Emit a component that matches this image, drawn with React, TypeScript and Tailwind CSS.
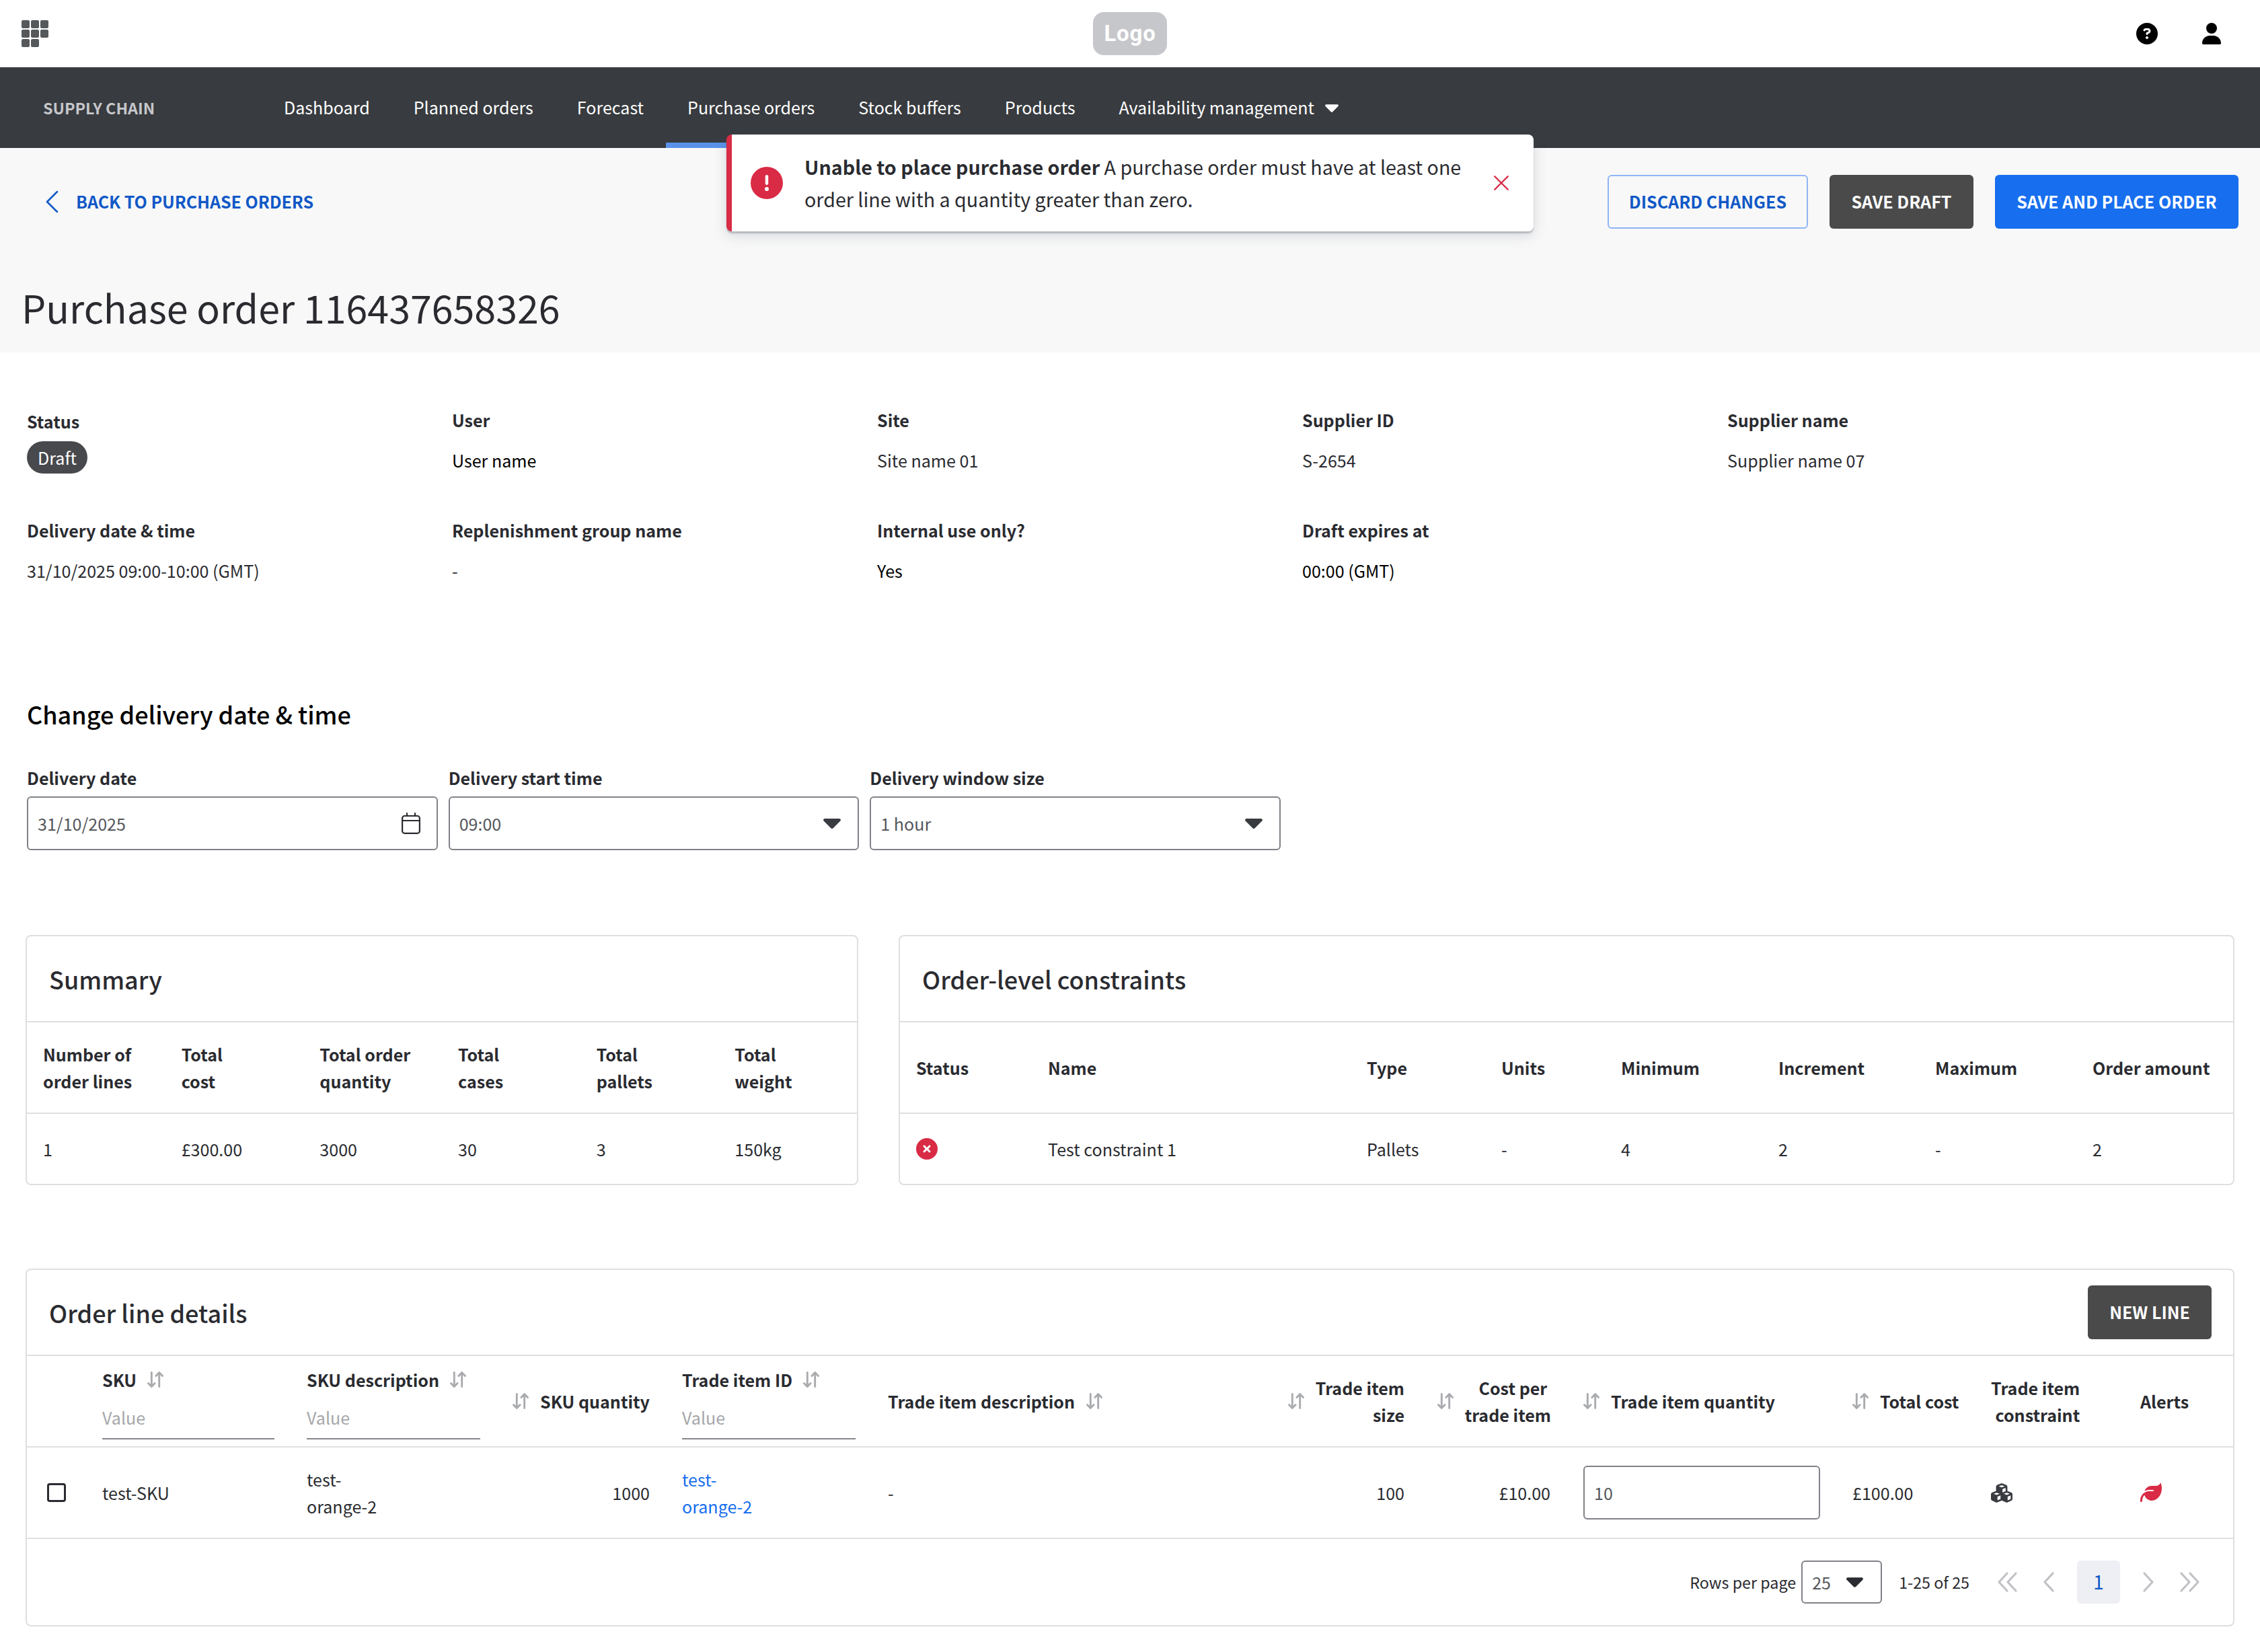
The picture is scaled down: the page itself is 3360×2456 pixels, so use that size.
import type { ReactNode } from "react";
import {
  FaCircleExclamation,
  FaCircleQuestion,
  FaCircleXmark,
  FaCubes,
  FaLeaf,
  FaUser,
} from "react-icons/fa6";

const navItems = [
  "Dashboard",
  "Planned orders",
  "Forecast",
  "Purchase orders",
  "Stock buffers",
  "Products",
];

const summary = [
  { label: ["Number of", "order lines"], value: "1" },
  { label: ["Total", "cost"], value: "£300.00" },
  { label: ["Total order", "quantity"], value: "3000" },
  { label: ["Total", "cases"], value: "30" },
  { label: ["Total", "pallets"], value: "3" },
  { label: ["Total", "weight"], value: "150kg" },
];

const Caret = ({ className }: { className?: string }) => (
  <svg viewBox="0 0 26 15" className={className} fill="currentColor">
    <path d="M2.2 0h21.6c1.9 0 2.8 2.2 1.5 3.5L14.6 14.3c-.9.9-2.3.9-3.2 0L.7 3.5C-.6 2.2.3 0 2.2 0z" />
  </svg>
);

const SortIcon = () => (
  <svg
    viewBox="0 0 24 24"
    className="size-6 shrink-0 text-[#a9abae]"
    fill="none"
    stroke="currentColor"
    strokeWidth="2.9"
    strokeLinecap="round"
    strokeLinejoin="round"
  >
    <path d="M6.3 1.5v21M1.5 17.6l4.8 4.9 4.8-4.9M17.7 22.5v-21M12.9 6.4l4.8-4.9 4.8 4.9" />
  </svg>
);

const Chevron = ({ d, className }: { d: string; className?: string }) => (
  <svg
    viewBox="0 0 32 32"
    className={className}
    fill="none"
    stroke="currentColor"
    strokeLinecap="round"
    strokeLinejoin="round"
  >
    <path d={d} />
  </svg>
);

const Field = ({ label, children }: { label: string; children: ReactNode }) => (
  <div className="flex flex-col gap-5">
    <p className="font-bold">{label}</p>
    <p>{children}</p>
  </div>
);

const Card = ({
  title,
  action,
  className,
  children,
}: {
  title: string;
  action?: ReactNode;
  className?: string;
  children: ReactNode;
}) => (
  <section className={`rounded-lg border-2 border-[#dedfe1] ${className ?? ""}`}>
    <div className="flex h-32 items-center justify-between border-b-2 border-[#dedfe1] pl-[33px] pr-8">
      <h2 className="text-[36px] font-medium leading-[48px]">{title}</h2>
      {action}
    </div>
    {children}
  </section>
);

const Filter = ({ label }: { label: string }) => (
  <div className="flex h-full flex-col px-6 pt-[15px]">
    <div className="flex items-center gap-4 font-bold">
      {label}
      <SortIcon />
    </div>
    <div className="mt-2 h-[61px] border-b-2 border-[#85878d] pt-2 font-normal text-[#a5a7aa]">
      Value
    </div>
  </div>
);

function Header() {
  return (
    <header className="flex h-[100px] items-center justify-between px-8">
      <div className="grid w-[400px] grid-cols-[12px_12px_12px] gap-0.5">
        {Array.from({ length: 8 }).map((_, i) => (
          <span key={i} className="size-3 rounded-[2px] bg-[#55595c]" />
        ))}
      </div>
      <div className="flex h-16 w-[110px] items-center justify-center rounded-2xl bg-[#c6c7cb] font-[Roboto,sans-serif] text-[33px] font-bold tracking-[0.8px] text-white">
        Logo
      </div>
      <div className="flex w-[400px] items-center justify-end gap-[66px] pr-[26px] text-black">
        <FaCircleQuestion className="size-8" />
        <FaUser className="h-8 w-7" />
      </div>
    </header>
  );
}

function Navbar() {
  return (
    <nav className="flex h-[120px] items-center bg-[#383b3f] pl-16 text-white">
      <p className="w-[325.5px] text-[23.3px] font-bold text-[#c6c7cb]">SUPPLY CHAIN</p>
      {navItems.map((item) => (
        <a
          key={item}
          className={`flex h-full items-center border-y-8 border-t-transparent px-[32.5px] pb-0.5 ${
            item === "Purchase orders" ? "border-b-[#5a92ea]" : "border-b-transparent"
          }`}
        >
          {item}
        </a>
      ))}
      <a className="flex h-full items-center gap-4 px-[32.5px] pb-0.5">
        Availability management
        <Caret className="mt-1 h-3 w-5" />
      </a>
    </nav>
  );
}

function Toast() {
  return (
    <div className="absolute left-[1080px] top-[200px] flex h-36 w-[1200px] items-center rounded-lg border-l-8 border-[#d92b45] bg-white pl-7 shadow-[0_3px_2px_rgba(80,85,95,0.3),0_6px_20px_rgba(80,90,120,0.2)]">
      <FaCircleExclamation className="size-12 shrink-0 text-[#d92b45]" />
      <p className="ml-8 w-[1000px] pb-px text-[28.65px] leading-[48px]">
        <b>Unable to place purchase order</b> A purchase order must have at least one
        <br />
        order line with a quantity greater than zero.
      </p>
      <Chevron d="M3 3l26 26M29 3L3 29" className="ml-6 size-6 stroke-[3.2] text-[#d92b45]" />
    </div>
  );
}

function Details() {
  return (
    <div className="grid grid-cols-[repeat(5,632px)] gap-y-16">
      <div className="flex flex-col pt-0.5">
        <p className="font-bold">Status</p>
        <span className="mt-2.5 flex h-12 w-[90px] items-center justify-center rounded-full bg-[#47494d] pb-px text-white">
          Draft
        </span>
      </div>
      <Field label="User">
        <span className="text-black">User name</span>
      </Field>
      <Field label="Site">Site name 01</Field>
      <Field label="Supplier ID">S-2654</Field>
      <Field label="Supplier name">Supplier name 07</Field>
      <Field label="Delivery date & time">31/10/2025 09:00-10:00 (GMT)</Field>
      <Field label="Replenishment group name">-</Field>
      <Field label="Internal use only?">
        <span className="text-black">Yes</span>
      </Field>
      <Field label="Draft expires at">
        <span className="text-black">00:00 (GMT)</span>
      </Field>
    </div>
  );
}

function DeliveryForm() {
  const fields = [
    { label: "Delivery date", value: "31/10/2025" },
    { label: "Delivery start time", value: "09:00" },
    { label: "Delivery window size", value: "1 hour" },
  ];

  return (
    <div className="mt-[51px] grid w-[1864px] grid-cols-3 gap-4">
      {fields.map(({ label, value }, i) => (
        <div key={label} className="flex flex-col gap-2">
          <p className="font-bold">{label}</p>
          <div className="flex h-20 items-center justify-between rounded-md border-2 border-[#808288] pl-3.5 pr-[25px] text-[#55575c]">
            {value}
            {i === 0 ? (
              <svg
                viewBox="0 0 28 32"
                className="-mr-px h-8 w-7 text-[#2a2b30]"
                fill="none"
                stroke="currentColor"
                strokeWidth="2.2"
                strokeLinecap="round"
              >
                <rect x="1.1" y="5" width="25.8" height="25.8" rx="3.4" />
                <path d="M1.1 12h25.8M8 1.2V5M20 1.2V5" />
              </svg>
            ) : (
              <Caret className="h-[15px] w-[26px] text-[#383b3f]" />
            )}
          </div>
        </div>
      ))}
    </div>
  );
}

function Constraints() {
  const cols = "grid grid-cols-[196px_474px_200px_178px_234px_233px_234px_1fr] items-center pl-6";
  return (
    <Card title="Order-level constraints" className="w-[1986px]">
      <div className={`${cols} h-[136px] border-b-2 border-[#dedfe1] font-bold`}>
        <span>Status</span>
        <span>Name</span>
        <span>Type</span>
        <span>Units</span>
        <span>Minimum</span>
        <span>Increment</span>
        <span>Maximum</span>
        <span>Order amount</span>
      </div>
      <div className={`${cols} h-[104px]`}>
        <FaCircleXmark className="size-8 text-[#d92b45]" />
        <span>Test constraint 1</span>
        <span>Pallets</span>
        <span>-</span>
        <span>4</span>
        <span>2</span>
        <span>-</span>
        <span>2</span>
      </div>
    </Card>
  );
}

function OrderLines() {
  const cols =
    "grid grid-cols-[88px_304px_306px_252px_306px_594px_222px_218px_400px_206px_222px_1fr] items-center border-b-2 border-[#dedfe1] h-[136px]";
  const sortable = "flex items-center gap-[17px] px-6 whitespace-nowrap";

  return (
    <Card
      title="Order line details"
      className="mt-[124px]"
      action={
        <button className="h-20 w-[184px] rounded-md bg-[#4a4a4a] pb-0.5 font-bold text-white">
          NEW LINE
        </button>
      }
    >
      <div className={`${cols} font-bold`}>
        <span />
        <Filter label="SKU" />
        <Filter label="SKU description" />
        <div className={`${sortable} justify-end`}>
          <SortIcon />
          SKU quantity
        </div>
        <Filter label="Trade item ID" />
        <div className={sortable}>
          Trade item description
          <SortIcon />
        </div>
        <div className={`${sortable} justify-end text-right`}>
          <SortIcon />
          <span>
            Trade item
            <br />
            size
          </span>
        </div>
        <div className={`${sortable} justify-end text-right`}>
          <SortIcon />
          <span>
            Cost per&nbsp;
            <br />
            trade item
          </span>
        </div>
        <div className={sortable}>
          <SortIcon />
          Trade item quantity
        </div>
        <div className={sortable}>
          <SortIcon />
          Total cost
        </div>
        <div className="flex px-6 text-right">
          Trade item
          <br />
          constraint
        </div>
        <span className="px-6">Alerts</span>
      </div>
      <div className={cols}>
        <span className="ml-[30px] size-7 rounded border-[3px] border-[#2a2b30]" />
        <span className="px-6">test-SKU</span>
        <span className="px-6">
          test-
          <br />
          orange-2
        </span>
        <span className="px-6 text-right">1000</span>
        <a className="px-6 text-[#176eef]">
          test-
          <br />
          orange-2
        </a>
        <span className="px-6">-</span>
        <span className="px-6 text-right">100</span>
        <span className="px-[25px] text-right">£10.00</span>
        <div className="mx-6 flex h-20 items-center rounded-md border-2 border-[#808288] px-3.5 text-[#55575c]">
          10
        </div>
        <span className="px-6">£100.00</span>
        <FaCubes className="ml-6 h-[29px] w-8 text-[#383b3f]" />
        <FaLeaf className="ml-6 size-8 text-[#d92b45]" />
      </div>
      <div className="flex h-32 items-center justify-end pr-12 text-[23.3px]">
        Rows per page
        <div className="ml-2 flex h-16 w-[120px] items-center justify-between rounded-md border-2 border-[#808288] pl-3.5 pr-[26px] text-[25px] text-[#55575c]">
          25
          <Caret className="h-[15px] w-[25px] text-[#2a2b30]" />
        </div>
        <span className="ml-[25px]">1-25 of 25</span>
        <div className="ml-10 flex items-center text-[#c0c2c6]">
          <Chevron d="M16 3L4 16l12 13M29 3L17 16l12 13" className="size-8 stroke-[3.2]" />
          <Chevron d="M22 3L10 16l12 13" className="ml-[30px] size-8 stroke-[3.2]" />
          <span className="ml-[26px] flex size-16 items-center justify-center rounded-md bg-[#eeeff4] pb-0.5 text-[28.6px] text-[#1158c7]">
            1
          </span>
          <Chevron d="M10 3l12 13-12 13" className="ml-[26px] size-8 stroke-[3.2]" />
          <Chevron d="M3 3l12 13L3 29M16 3l12 13-12 13" className="ml-[30px] size-8 stroke-[3.2]" />
        </div>
      </div>
    </Card>
  );
}

export default function App() {
  return (
    <div className="relative h-[2456px] w-[3360px] overflow-hidden bg-white font-['Noto_Sans_CJK_SC',sans-serif] text-[25.07px] leading-10 text-[#2a2b30]">
      <Header />
      <Navbar />
      <div className="h-[304px] bg-[#f8f8f8] px-8 pt-10">
        <div className="flex h-20 items-center gap-8 font-bold">
          <a className="mr-auto flex items-center gap-5 pl-[29px] text-[#1158c7]">
            <Chevron d="M24 1L9 16l15 15" className="size-8 stroke-[2.6]" />
            <span className="pb-0.5 tracking-[-0.08px]">BACK TO PURCHASE ORDERS</span>
          </a>
          <button className="h-20 w-[298px] rounded-md border-2 border-[#8fb5f6] pb-0.5 text-[#1158c7]">
            DISCARD CHANGES
          </button>
          <button className="h-20 w-[214px] rounded-md bg-[#4a4a4a] pb-0.5 text-white">
            SAVE DRAFT
          </button>
          <button className="h-20 w-[362px] rounded-md bg-[#176eef] pb-0.5 text-white">
            SAVE AND PLACE ORDER
          </button>
        </div>
        <h1 className="mt-[77px] text-[57.3px] leading-[80px]">Purchase order 116437658326</h1>
      </div>
      <main className="px-[38px] pt-20">
        <div className="px-0.5">
          <Details />
          <h2 className="mt-[169px] text-[36px] font-medium leading-[48px] text-black">
            Change delivery date & time
          </h2>
          <DeliveryForm />
        </div>
        <div className="mt-[126px] flex justify-between">
          <Card title="Summary" className="w-[1238px]">
            <div className="grid h-[136px] grid-cols-6 items-center border-b-2 border-[#dedfe1] font-bold">
              {summary.map(({ label }) => (
                <span key={label.join(" ")} className="pl-6">
                  {label[0]}
                  <br />
                  {label[1]}
                </span>
              ))}
            </div>
            <div className="grid h-[104px] grid-cols-6 items-center">
              {summary.map(({ label, value }) => (
                <span key={label.join(" ")} className="pl-6">
                  {value}
                </span>
              ))}
            </div>
          </Card>
          <Constraints />
        </div>
        <OrderLines />
      </main>
      <Toast />
    </div>
  );
}
